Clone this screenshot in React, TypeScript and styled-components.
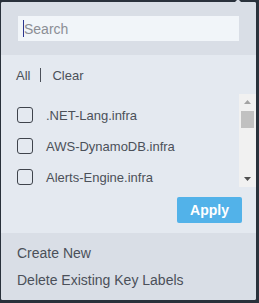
import React from "react";
import styled, { createGlobalStyle } from "styled-components";

const Global = createGlobalStyle`
  html, body { margin: 0; padding: 0; background: #29313b; }
  body { font-family: "Liberation Sans", Arial, sans-serif; }
`;

const Panel = styled.div`
  position: relative;
  margin: 2px 3px 0 1px;
  width: 255px;
  height: 298px;
  display: flex;
  flex-direction: column;
  background: #e4e9f0;
  border-radius: 2px;
`;

const Caret = styled.div`
  position: absolute;
  top: -3px;
  right: 14px;
  width: 0;
  height: 0;
  border-left: 4px solid transparent;
  border-right: 4px solid transparent;
  border-bottom: 4px solid #d9dee6;
`;

const SearchBar = styled.div`
  background: #d9dee6;
  padding: 14px 16px 14px 17px;
  border-radius: 2px 2px 0 0;
`;

const InputWrap = styled.div`
  position: relative;
  width: 221px;
  &::before {
    content: "";
    position: absolute;
    left: 5px;
    top: 4px;
    width: 1px;
    height: 17px;
    background: #2b3590;
  }
`;

const SearchInput = styled.input`
  box-sizing: border-box;
  display: block;
  width: 221px;
  height: 25px;
  border: none;
  outline: none;
  background: #f1f5f9;
  padding: 0 5px 0 6px;
  font-family: "Liberation Sans", Arial, sans-serif;
  font-size: 14px;
  color: #333;
  &::placeholder { color: #8b8e95; }
`;

const Body = styled.div`
  flex: 1;
  display: flex;
  flex-direction: column;
  padding: 12px 14px 0 15px;
`;

const Links = styled.div`
  display: flex;
  align-items: center;
  font-size: 13px;
  color: #4b5059;
  height: 16px;
`;

const Divider = styled.span`
  display: inline-block;
  width: 1px;
  height: 14px;
  background: #4b5059;
  margin: 0 11px 0 10px;
`;

const ListWrap = styled.div`
  margin-top: 11px;
  margin-right: -14px;
  height: 93px;
  display: flex;
`;

const List = styled.div`
  flex: 1;
  display: flex;
  flex-direction: column;
  padding-top: 13px;
  gap: 15px;
`;

const Row = styled.label`
  display: flex;
  align-items: center;
  height: 16px;
  font-size: 13px;
  color: #4b5059;
`;

const Box = styled.span`
  box-sizing: border-box;
  width: 16px;
  height: 16px;
  border: 1.5px solid #3f444c;
  border-radius: 3px;
  margin: 0 13px 0 1px;
`;

const Scrollbar = styled.div`
  width: 17px;
  background: #f1f1f1;
  display: flex;
  flex-direction: column;
  align-items: center;
`;

const Thumb = styled.div`
  width: 13px;
  height: 17px;
  background: #c1c1c1;
  margin-top: 1px;
`;

const Spacer = styled.div`
  flex: 1;
`;

const Arrow = styled.svg`
  display: block;
`;

const Actions = styled.div`
  display: flex;
  justify-content: flex-end;
  margin-top: 10px;
`;

const ApplyButton = styled.button`
  width: 65px;
  height: 26px;
  border: none;
  border-radius: 2px;
  background: #52b2e9;
  color: #fff;
  font-family: "Liberation Sans", Arial, sans-serif;
  font-weight: bold;
  font-size: 14px;
  padding: 0;
`;

const Footer = styled.div`
  background: #d9dee6;
  height: 67px;
  display: flex;
  flex-direction: column;
  padding: 12px 15px 0 16px;
  gap: 11px;
  box-sizing: border-box;
  border-radius: 0 0 2px 2px;
`;

const FooterLink = styled.div`
  font-size: 14px;
  color: #4b5059;
  height: 16px;
  line-height: 16px;
`;

const items = [".NET-Lang.infra", "AWS-DynamoDB.infra", "Alerts-Engine.infra"];

export default function App() {
  return (
    <>
      <Global />
      <Panel>
        <Caret />
        <SearchBar>
          <InputWrap>
            <SearchInput placeholder="Search" />
          </InputWrap>
        </SearchBar>
        <Body>
          <Links>
            <span>All</span>
            <Divider />
            <span>Clear</span>
          </Links>
          <ListWrap>
            <List>
              {items.map((t) => (
                <Row key={t}>
                  <Box />
                  {t}
                </Row>
              ))}
            </List>
            <Scrollbar>
              <Arrow width="17" height="16" viewBox="0 0 17 16">
                <path d="M5 10 L8.5 6 L12 10 Z" fill="#a3a3a3" />
              </Arrow>
              <Thumb />
              <Spacer />
              <Arrow width="17" height="16" viewBox="0 0 17 16">
                <path d="M5 6 L12 6 L8.5 10 Z" fill="#505050" />
              </Arrow>
            </Scrollbar>
          </ListWrap>
          <Actions>
            <ApplyButton>Apply</ApplyButton>
          </Actions>
        </Body>
        <Footer>
          <FooterLink>Create New</FooterLink>
          <FooterLink>Delete Existing Key Labels</FooterLink>
        </Footer>
      </Panel>
    </>
  );
}
